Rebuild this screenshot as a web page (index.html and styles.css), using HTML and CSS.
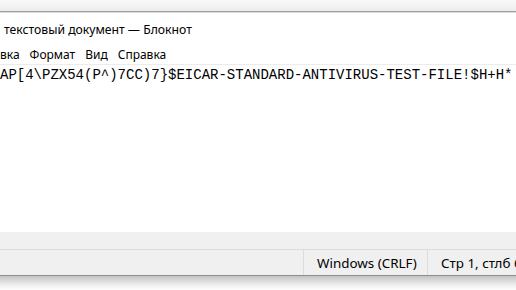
FILE: index.html
```html
<!DOCTYPE html>
<html lang="ru">
<head>
  <meta charset="utf-8">
  <title>Блокнот</title>
  <link rel="stylesheet" href="styles.css">
</head>
<body>
  <div class="desk"></div>
  <div class="window">
    <div class="titlebar">
      <span class="title">текстовый документ — Блокнот</span>
    </div>
    <div class="menu">
      <span class="item first">вка</span>
      <span class="item">Формат</span>
      <span class="item">Вид</span>
      <span class="item">Справка</span>
    </div>
    <div class="editor">
      <div class="line">AP[4\PZX54(P^)7CC)7}$EICAR-STANDARD-ANTIVIRUS-TEST-FILE!$H+H*</div>
    </div>
    <div class="hscroll"></div>
    <div class="status">
      <div class="cell grow"></div>
      <div class="cell eol">Windows (CRLF)</div>
      <div class="cell pos">Стр 1, стлб 69</div>
    </div>
  </div>
  <div class="shadow"></div>
</body>
</html>
```
FILE: styles.css
```css
html, body {
  margin: 0;
  padding: 0;
  width: 516px;
  height: 290px;
  overflow: hidden;
  background: #ffffff;
}
.desk {
  height: 11px;
  background: linear-gradient(#f8f8f8, #ededed);
  border-bottom: 1px solid #a0a0a0;
}
.window {
  background: #ffffff;
  border-top: 1px solid #dcdcdc;
}
.titlebar {
  height: 32px;
  display: flex;
  align-items: center;
  font-family: "Noto Sans", sans-serif;
  font-size: 12.2px;
  color: #000;
}
.title {
  margin-left: 4px;
  margin-top: 1px;
}
.menu {
  height: 19px;
  display: flex;
  align-items: center;
  font-family: "Noto Sans", sans-serif;
  font-size: 12px;
  color: #000;
}
.item {
  margin-right: 10px;
}
.editor {
  height: 167px;
  border-top: 1px solid #ececec;
}
.line {
  font-family: "Liberation Mono", monospace;
  font-size: 14px;
  line-height: 18px;
  color: #000;
  white-space: pre;
  margin-top: 1px;
}
.hscroll {
  height: 17px;
  background: #f0f0f0;
  border-bottom: 1px solid #dcdcdc;
}
.status {
  height: 25px;
  display: flex;
  background: #f0f0f0;
  border-bottom: 1px solid #8c8c8c;
  font-family: "Noto Sans", sans-serif;
  font-size: 13.4px;
  color: #000;
}
.cell {
  display: flex;
  align-items: center;
  box-sizing: border-box;
  flex-shrink: 0;
  border-right: 1px solid #dcdcdc;
}
.grow {
  width: 304px;
}
.eol {
  width: 124px;
  padding-left: 13px;
}
.pos {
  flex: 1 1 0;
  min-width: 0;
  padding-left: 13px;
  border-right: none;
  white-space: nowrap;
  overflow: hidden;
}
.shadow {
  height: 14px;
  background: linear-gradient(#c4c4c4, #f2f2f2 70%, #ffffff);
}
```
